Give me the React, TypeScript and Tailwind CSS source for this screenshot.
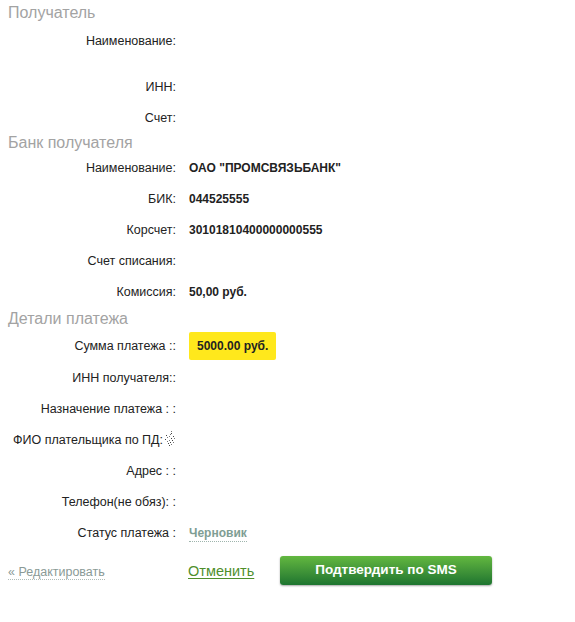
import React from 'react';

interface Row {
  label: string;
  value?: React.ReactNode;
  tall?: boolean;
  hint?: boolean;
}

interface Section {
  title: string;
  rows: Row[];
}

const sections: Section[] = [
  {
    title: 'Получатель',
    rows: [
      { label: 'Наименование:', tall: true },
      { label: 'ИНН:' },
      { label: 'Счет:' },
    ],
  },
  {
    title: 'Банк получателя',
    rows: [
      { label: 'Наименование:', value: 'ОАО "ПРОМСВЯЗЬБАНК"' },
      { label: 'БИК:', value: '044525555' },
      { label: 'Корсчет:', value: '30101810400000000555' },
      { label: 'Счет списания:' },
      { label: 'Комиссия:', value: '50,00 руб.' },
    ],
  },
];

// dotted hint glyph next to the ФИО label
function HintDots() {
  return (
    <svg width="12" height="15" viewBox="0 0 12 15" className="ml-[1px] -mt-[3px]">
      {[
        [7, 0], [7, 2], [6, 3], [2, 4], [5, 5], [9, 5], [3, 6], [7, 7], [10, 7], [1, 8],
        [5, 9], [8, 9], [3, 10], [6, 11], [9, 11], [4, 12], [7, 13], [5, 14],
      ].map(([x, y], i) => (
        <rect key={i} x={x} y={y} width="1" height="1" fill={i % 2 ? '#444' : '#777'} />
      ))}
    </svg>
  );
}

function FieldRow({ label, value, tall, hint }: Row) {
  return (
    <div className={`flex ${tall ? 'h-[49px] items-start pt-[12px]' : 'h-[31px] items-center'}`}>
      <div className="w-[176px] shrink-0 flex justify-end items-center text-[12.5px] leading-[14px] text-[#222] whitespace-nowrap">
        {label}
        {hint && <HintDots />}
      </div>
      {value !== undefined && (
        <div className="ml-[13px] text-[12px] leading-[14px] font-bold text-[#222]">{value}</div>
      )}
    </div>
  );
}

function SectionTitle({ children, className = '' }: { children: React.ReactNode; className?: string }) {
  return (
    <div className={`h-[19px] flex items-center pl-[8px] text-[16px] leading-[19px] text-[#a3a3a3] ${className}`}>
      {children}
    </div>
  );
}

export default function App() {
  return (
    <div className="w-[575px] h-[622px] bg-white pt-[3px] font-['Liberation_Sans',Arial,sans-serif]">
      {sections.map((s) => (
        <div key={s.title}>
          <SectionTitle>{s.title}</SectionTitle>
          {s.rows.map((r, i) => (
            <FieldRow key={i} {...r} />
          ))}
        </div>
      ))}

      <SectionTitle className="mt-[2px]">Детали платежа</SectionTitle>
      <div className="flex h-[34px] items-center pt-[2px]">
        <div className="w-[176px] shrink-0 text-right text-[12.5px] leading-[14px] text-[#222]">
          Сумма платежа ::
        </div>
        <div className="ml-[13px] h-[28px] px-[8px] flex items-center bg-[#ffe81c] rounded-[2px] text-[12px] font-bold text-[#222]">
          5000.00 руб.
        </div>
      </div>
      <FieldRow label="ИНН получателя::" />
      <FieldRow label="Назначение платежа : :" />
      <FieldRow label="ФИО плательщика по ПД:" hint />
      <FieldRow label="Адрес : :" />
      <FieldRow label="Телефон(не обяз): :" />
      <FieldRow
        label="Статус платежа :"
        value={
          <span className="text-[#7f9e94] border-b border-dotted border-[#9fb5ad] pb-[1px]">Черновик</span>
        }
      />

      <div className="flex items-center mt-[8px] h-[29px]">
        <div className="w-[188px] shrink-0 pl-[8px]">
          <a className="text-[12.5px] leading-[14px] text-[#8a9a96] border-b border-dotted border-[#b0bcb8]">
            « Редактировать
          </a>
        </div>
        <div className="w-[92px] shrink-0">
          <a className="text-[14.5px] leading-[16px] text-[#4f8f2c] underline underline-offset-2">Отменить</a>
        </div>
        <button className="w-[212px] h-[29px] rounded-[3px] bg-gradient-to-b from-[#63b840] to-[#1d7530] shadow-[0_1px_2px_rgba(0,0,0,0.35)] text-white text-[13.5px] font-bold">
          Подтвердить по SMS
        </button>
      </div>
    </div>
  );
}
